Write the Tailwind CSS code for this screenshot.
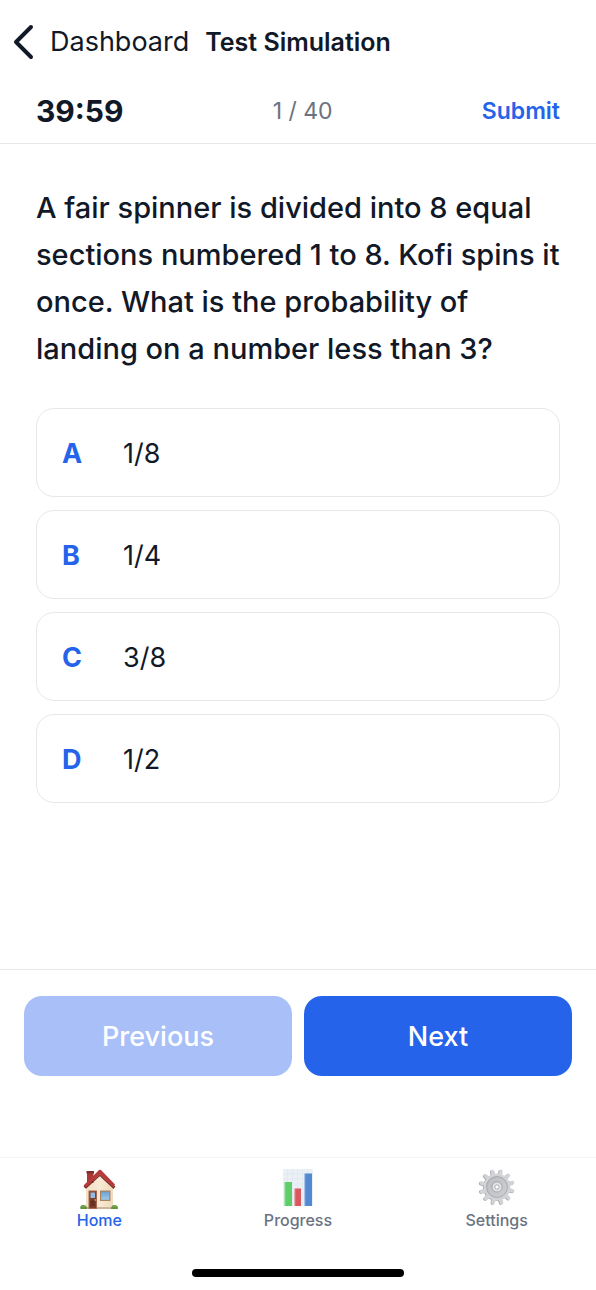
<!DOCTYPE html>
<html lang="en">
<head>
  <meta charset="UTF-8">
  <meta name="viewport" content="width=device-width, initial-scale=1">
  <title>Test Simulation</title>
  <script src="https://cdn.jsdelivr.net/npm/@tailwindcss/browser@4"></script>
</head>
<body class="min-h-screen flex flex-col bg-white text-[#111827] font-['Inter','Liberation_Sans',sans-serif]">
  <header class="flex items-center h-20 pl-3 pt-1">
    <a href="#" class="flex items-center gap-4 text-[27px] leading-10">
      <svg class="w-[22px] h-9" viewBox="0 0 22 36" fill="none" stroke="#111827" stroke-width="4" stroke-linecap="round" stroke-linejoin="round"><path d="M19 3 4 18l15 15"/></svg>
      Dashboard
    </a>
    <h1 class="ml-4 text-[25px] leading-10 font-semibold">Test Simulation</h1>
  </header>

  <div class="flex items-center justify-between h-16 px-9 border-b border-gray-200">
    <span class="text-[30px] font-bold">39:59</span>
    <span class="text-[23px] text-[#6b7280]">1 / 40</span>
    <button class="text-[23px] font-semibold text-[#2563eb]">Submit</button>
  </div>

  <main class="flex-1 px-9 pt-10">
    <p id="question" class="text-[29px] leading-[47px] font-medium"></p>
    <div id="options" class="mt-9 flex flex-col gap-[13px]"></div>
  </main>

  <div class="grid grid-cols-2 gap-3 px-6 pt-[26px] h-[188px] border-t border-gray-200">
    <button disabled class="h-20 pt-0.5 rounded-[18px] bg-[#a9bff8] text-white text-[27px] font-medium">Previous</button>
    <button class="h-20 pt-0.5 rounded-[18px] bg-[#2563eb] text-white text-[27px] font-medium">Next</button>
  </div>

  <nav class="grid grid-cols-3 pt-2 border-t border-gray-100 text-[16px] leading-5 font-medium text-[#6b7280]">
    <a href="#" class="flex flex-col items-center text-[#2563eb]">
      <svg class="w-11 h-11" viewBox="0 0 44 44">
        <defs>
          <linearGradient id="wall" x2="1"><stop stop-color="#f3dfc4"/><stop offset=".5" stop-color="#f8ead4"/><stop offset="1" stop-color="#efdabb"/></linearGradient>
          <linearGradient id="pane" y2="1" x2="0"><stop stop-color="#6f9fd0"/><stop offset="1" stop-color="#9dcbef"/></linearGradient>
        </defs>
        <path d="M9 21 22.500 8 36 21v22H9z" fill="url(#wall)"/>
        <path d="M9 41h27v2H9z" fill="#cbb69b"/>
        <path d="M10 6h6.500v11H10z" fill="#a83a36"/>
        <path d="M9.500 5h7.500v2.500H9.500z" fill="#842c2b"/>
        <path d="M22 4q1-.6 2 0L38 18.500 36.500 21.500 22.800 8.500 9 21.500 6.500 19.500z" fill="#b8393a"/>
        <path d="M7 20.200 9 22 22.800 9.200 36.500 22l1.500-2" fill="none" stroke="#7c2928" stroke-width="1.200"/>
        <path d="M11.500 24.500h8.500V43h-8.500z" fill="#a8694e"/>
        <path d="M12.500 25.500h6.500V42h-6.500z" fill="#7b3f2c"/>
        <path d="M13.500 26.500h4.500v5.500h-4.500z" fill="#92bce0"/>
        <path d="M13.500 34.500h4.500v5.500h-4.500z" fill="#69311f"/>
        <circle cx="18.300" cy="34" r=".7" fill="#f0cb72"/>
        <path d="M23 24.500h10.500v10.500H23z" fill="#a98263"/>
        <path d="M24.200 25.700h8.100v8.100h-8.100z" fill="url(#pane)"/>
        <path d="M3.500 43c-.8-2.500.8-4 2.500-4 2.500 0 4.500 1.500 4 4zM34 43c0-2.500 1.500-4 3.500-4 2.500 0 4 1.500 3.300 4z" fill="#5f9440"/>
        <path d="M5 41c1-1.500 2.500-1.500 3.500 0M36 41c1-1.500 2.500-1.500 3.500 0" fill="none" stroke="#8dbb5b"/>
      </svg>
      Home
    </a>
    <a href="#" class="flex flex-col items-center">
      <svg class="w-11 h-11" viewBox="0 0 44 44">
        <path d="M7 3h30v37H7z" fill="#eaf0f6"/>
        <path d="M11.500 3v37M16.500 3v37M21.500 3v37M26.500 3v37M31.500 3v37M7 8h30M7 13h30M7 18h30M7 23h30M7 28h30M7 33h30" stroke="#dde5ee" stroke-width=".6"/>
        <path d="M8.500 16H16v24H8.500z" fill="#5fce68"/>
        <path d="M18.500 22.500H25V40h-6.500z" fill="#d9595e"/>
        <path d="M28.500 7.500H36V40h-7.500z" fill="#5289d3"/>
        <path d="M9 16v24M19 22.500V40M29 7.500V40" stroke="#fff" stroke-opacity=".25"/>
      </svg>
      Progress
    </a>
    <a href="#" class="flex flex-col items-center">
      <svg class="w-11 h-11" viewBox="0 0 44 44">
        <defs>
          <linearGradient id="steel" x2="1" y2="1"><stop stop-color="#b4b5ba"/><stop offset="1" stop-color="#d0d1d5"/></linearGradient>
          <path id="tooth" d="M19.800 9 20.300 4.300q.1-1.100 1.200-1.100h1q1.100 0 1.200 1.100L24.200 9z"/>
          <g id="gear">
            <use href="#tooth"/><use href="#tooth" transform="rotate(30 22 21)"/><use href="#tooth" transform="rotate(60 22 21)"/><use href="#tooth" transform="rotate(90 22 21)"/><use href="#tooth" transform="rotate(120 22 21)"/><use href="#tooth" transform="rotate(150 22 21)"/><use href="#tooth" transform="rotate(180 22 21)"/><use href="#tooth" transform="rotate(210 22 21)"/><use href="#tooth" transform="rotate(240 22 21)"/><use href="#tooth" transform="rotate(270 22 21)"/><use href="#tooth" transform="rotate(300 22 21)"/><use href="#tooth" transform="rotate(330 22 21)"/>
            <circle cx="22" cy="21" r="13.300"/>
          </g>
        </defs>
        <use href="#gear" fill="#a3a4a9" transform="rotate(14 22 21) translate(-.6 .6)"/>
        <use href="#gear" fill="#d2d3d7" transform="rotate(14 22 21)"/>
        <circle cx="22" cy="21" r="10.500" fill="url(#steel)" stroke="#a2a3a8" stroke-width=".8"/>
        <circle cx="22" cy="21" r="8" fill="none" stroke="#c9cace" stroke-width="1.200"/>
        <circle cx="22" cy="21" r="5" fill="#e4e5e8" stroke="#a0a1a6" stroke-width=".8"/>
        <circle cx="22" cy="21" r="2.200" fill="#fff" stroke="#97989d" stroke-width=".8"/>
      </svg>
      Settings
    </a>
  </nav>
  <div class="flex justify-center pt-[39px] pb-[13px]">
    <div class="w-[212px] h-2 rounded-full bg-black"></div>
  </div>

  <script>
    const question = {
      text: "A fair spinner is divided into 8 equal sections numbered 1 to 8. Kofi spins it once. What is the probability of landing on a number less than 3?",
      options: ["1/8", "1/4", "3/8", "1/2"]
    };

    document.getElementById("question").textContent = question.text;
    const container = document.getElementById("options");

    question.options.forEach((opt, i) => {
      container.innerHTML += `
        <button class="flex items-center h-[89px] px-[25px] pt-1 border border-gray-200 rounded-[18px] text-left text-[27px]">
          <span class="w-[61px] font-bold text-[#2563eb]">${"ABCD"[i]}</span>
          <span>${opt}</span>
        </button>
      `;
    });
  </script>
</body>
</html>
